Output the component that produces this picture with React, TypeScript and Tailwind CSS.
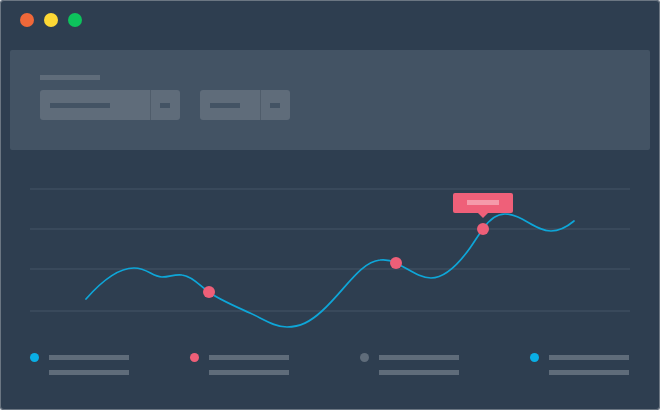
import React from "react";

const curve =
  "M86 299 C100 283 118 268 134 268 C148 268 152 277 162 277 C170 277 174 274 182 275 C192 276 200 286 209 292 C218 299 230 304 250 313 C265 320 275 327 287 327 C300 327 310 322 322 311 C345 290 360 262 380 260 C388 259 392 261 396 263 C410 270 420 278 431 278 C445 278 460 262 470 248 C475 241 479 234 483 229 C489 220 496 214 505 214 C522 214 535 231 551 231 C561 231 568 226 574 221";

function LegendItem({ color, width }: { color: string; width: string }) {
  return (
    <div className={`flex flex-col ${width}`}>
      <div className="flex items-center gap-[10px]">
        <div className="w-[9px] h-[9px] rounded-full" style={{ backgroundColor: color }} />
        <div className="w-[80px] h-[5px] bg-[#5f6c7a]" />
      </div>
      <div className="w-[80px] h-[5px] bg-[#5f6c7a] ml-[19px] mt-[8px]" />
    </div>
  );
}

export default function App() {
  return (
    <div className="w-[660px] h-[410px] bg-[#d3d7db]">
      <div className="w-[660px] h-[410px] bg-[#2e3e50] rounded-[4px] shadow-[inset_0_0_0_1px_#6b7682] flex flex-col overflow-hidden">
        <div className="h-[50px] flex items-start pt-[13px] pl-[20px] gap-[10px] shrink-0">
          <div className="w-[14px] h-[14px] rounded-full bg-[#ef6839]" />
          <div className="w-[14px] h-[14px] rounded-full bg-[#fdd835]" />
          <div className="w-[14px] h-[14px] rounded-full bg-[#0dc35c]" />
        </div>
        <div className="mx-[10px] h-[100px] bg-[#435364] rounded-[2px] pl-[30px] pt-[25px] shrink-0">
          <div className="w-[60px] h-[5px] bg-[#5f6c7a]" />
          <div className="flex gap-[20px] mt-[10px]">
            <div className="w-[140px] h-[30px] bg-[#5f6c7a] rounded-[3px] flex">
              <div className="w-[110px] flex items-center pl-[10px]">
                <div className="w-[60px] h-[5px] bg-[#435364]" />
              </div>
              <div className="w-px bg-[#4f5c6a]" />
              <div className="flex-1 flex items-center pl-[9px]">
                <div className="w-[10px] h-[5px] bg-[#435364]" />
              </div>
            </div>
            <div className="w-[90px] h-[30px] bg-[#5f6c7a] rounded-[3px] flex">
              <div className="w-[60px] flex items-center pl-[10px]">
                <div className="w-[30px] h-[5px] bg-[#435364]" />
              </div>
              <div className="w-px bg-[#4f5c6a]" />
              <div className="flex-1 flex items-center pl-[9px]">
                <div className="w-[10px] h-[5px] bg-[#435364]" />
              </div>
            </div>
          </div>
        </div>
        <svg width="660" height="190" viewBox="0 150 660 190" className="shrink-0 block">
          {[189, 229, 269, 311].map((y) => (
            <line key={y} x1="30" x2="630" y1={y} y2={y} stroke="#3e4e5f" strokeWidth="1.6" />
          ))}
          <path d={curve} fill="none" stroke="#0ea6d8" strokeWidth="1.7" strokeLinecap="round" />
          <circle cx="209" cy="292" r="6" fill="#ee5f78" />
          <circle cx="396" cy="263" r="6" fill="#ee5f78" />
          <circle cx="483" cy="229" r="6" fill="#ee5f78" />
          <rect x="453" y="193" width="60" height="20" rx="2" fill="#ef6079" />
          <path d="M478 213 L488 213 L483 218 Z" fill="#ef6079" />
          <rect x="467" y="200" width="32" height="5" fill="#f59aaa" />
        </svg>
        <div className="flex pl-[30px] pt-[13px]">
          <LegendItem color="#0aaee4" width="w-[160px]" />
          <LegendItem color="#ee5f78" width="w-[170px]" />
          <LegendItem color="#5f6c7a" width="w-[170px]" />
          <LegendItem color="#0aaee4" width="w-[100px]" />
        </div>
      </div>
    </div>
  );
}
